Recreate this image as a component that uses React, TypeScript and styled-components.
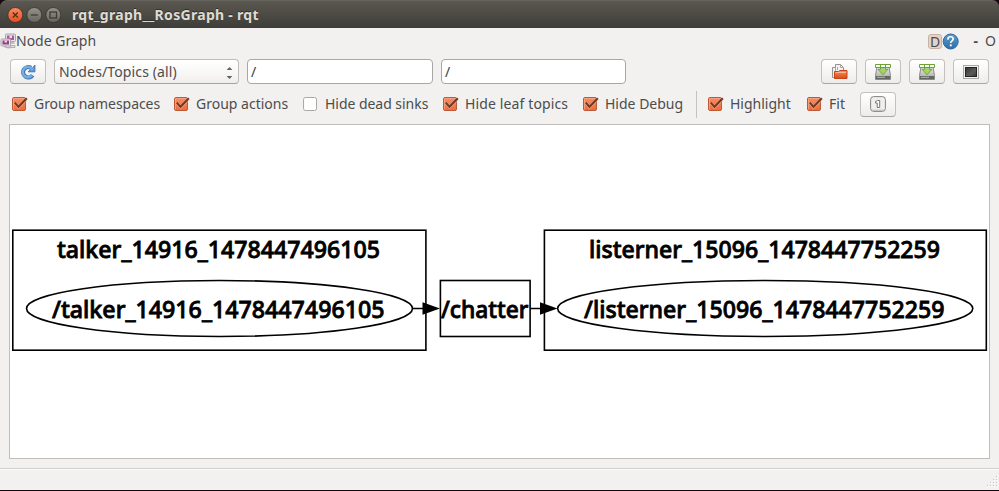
import React from "react";
import styled, { createGlobalStyle } from "styled-components";

const GlobalStyle = createGlobalStyle`
  * { box-sizing: border-box; }
  body { margin: 0; background: #1a0612; overflow: hidden; }
`;

const Window = styled.div`
  width: 999px;
  height: 491px;
  display: flex;
  flex-direction: column;
  border-bottom: 1px solid #160611;
  background: #1a0612;
  color: #4c4c4c;
  font: 14px/20px "Noto Sans", "Open Sans", sans-serif;
  white-space: nowrap;
`;

const TitleBar = styled.header`
  height: 28px;
  flex: none;
  display: flex;
  align-items: center;
  gap: 3px;
  padding-left: 7px;
  border-radius: 7px 7px 0 0;
  border-top: 1px solid #66645c;
  background: linear-gradient(#5a5850, #3e3d38);
`;

const Title = styled.h1`
  margin: 0 0 0 8px;
  color: #dfdbd2;
  font-size: 14px;
  line-height: 24px;
  font-weight: 700;
  letter-spacing: 0.3px;
  text-shadow: 0 -1px #30302c;
`;

const Body = styled.main`
  flex: 1;
  display: flex;
  flex-direction: column;
  background: #f2f1f0;
`;

const DockHeader = styled.div`
  height: 26px;
  display: flex;
  align-items: center;
  padding-right: 3px;
`;

const DockTitle = styled.span`
  flex: 1;
`;

const DockIcon = styled.span`
  display: flex;
  width: 16px;
`;

const DButton = styled.span`
  width: 14px;
  height: 15px;
  border: 1px solid #c9b1a3;
  border-radius: 3px;
  background: #e6d3c8;
  line-height: 13px;
  text-align: center;
`;

const DockSign = styled.span<{ $w: number; $bold?: boolean }>`
  width: ${(p) => p.$w}px;
  font-weight: ${(p) => (p.$bold ? 700 : 400)};
  text-align: right;
`;

const Toolbar = styled.div`
  height: 35px;
  display: flex;
  align-items: center;
  gap: 8px;
  padding: 0 10px;
`;

const Spacer = styled.div`
  flex: 1;
`;

const PushButton = styled.button`
  width: 36px;
  height: 25px;
  flex: none;
  display: flex;
  align-items: center;
  justify-content: center;
  padding: 0;
  border: 1px solid #c3c0bd;
  border-bottom-color: #a9a6a3;
  border-radius: 4px;
  background: linear-gradient(#fff, #f3f2f1 70%, #ececea);
`;

const Combo = styled.div`
  width: 185px;
  height: 25px;
  display: flex;
  align-items: center;
  justify-content: space-between;
  padding: 0 5px 0 4px;
  border: 1px solid #c0bdba;
  border-bottom-color: #a5a2a0;
  border-radius: 4px;
  background: linear-gradient(#fff, #f6f5f4 70%, #eeedec);
  letter-spacing: 0.13px;
`;

const LineEdit = styled.div<{ $w: number }>`
  width: ${(p) => p.$w}px;
  height: 25px;
  padding: 2px 3px;
  border: 1px solid #a9a6a3;
  border-radius: 4px;
  background: #fff;
  color: #3c3c3c;
`;

const Options = styled.div`
  height: 30px;
  display: flex;
  align-items: center;
  padding-left: 12px;
`;

const Option = styled.label<{ $w: number; $ls?: number }>`
  width: ${(p) => p.$w}px;
  flex: none;
  display: flex;
  align-items: center;
  gap: 6px;
  letter-spacing: ${(p) => p.$ls ?? 0}px;
`;

const Separator = styled.div`
  width: 12px;
  height: 27px;
  border-left: 1px solid #c4c2c0;
`;

const Canvas = styled.section`
  height: 335px;
  margin: 5px 9px 9px;
  border: 1px solid #bfbdbb;
  background: #fff;
`;

const StatusBar = styled.footer`
  flex: 1;
  display: flex;
  align-items: flex-end;
  justify-content: flex-end;
  padding: 0 0 2px;
  border-top: 1px solid #d2d0ce;
  box-shadow: inset 0 1px #fbfbfa;
`;

const CheckIcon = ({ on }: { on: boolean }) => (
  <svg width="16" height="16" viewBox="0 0 16 16">
    <defs>
      <linearGradient id="checkFill" x2="0" y2="1">
        <stop offset="0" stopColor="#f58e66" />
        <stop offset="1" stopColor="#ed6a3b" />
      </linearGradient>
    </defs>
    {on ? (
      <>
        <rect x=".5" y="1.5" width="13" height="13" rx="1.5" fill="url(#checkFill)" stroke="#bd5936" />
        <path d="M1.5 13.5V2.5h11" fill="none" stroke="#f9a98b" strokeOpacity=".7" />
        <path d="M3 7.2 6.5 11 15 2.5" fill="none" stroke="#fac0a5" strokeWidth="3.4" strokeOpacity=".45" />
        <path d="M2.8 6.7 6.5 10.8 14.8 2.2" fill="none" stroke="#6d3a29" strokeWidth="2" />
      </>
    ) : (
      <rect x=".5" y="1.5" width="13" height="13" rx="2" fill="#fff" stroke="#aaa7a4" />
    )}
  </svg>
);

const WindowButton = ({ kind }: { kind: "close" | "min" | "max" }) => (
  <svg width="16" height="16" viewBox="0 0 16 16">
    <defs>
      <linearGradient id={`wb-${kind}`} x2="0" y2="1">
        <stop offset="0" stopColor={kind === "close" ? "#f88b65" : "#96948a"} />
        <stop offset="1" stopColor={kind === "close" ? "#e64e1c" : "#66645c"} />
      </linearGradient>
    </defs>
    <circle cx="8.3" cy="8" r="7.5" fill={`url(#wb-${kind})`} stroke="#35342f" strokeWidth=".8" />
    {kind === "close" && <path d="M5.8 5.5l5 5M10.8 5.5l-5 5" stroke="#52301f" strokeWidth="1.3" />}
    {kind === "min" && <path d="M4.8 8h7" stroke="#3d3c37" strokeWidth="1.3" />}
    {kind === "max" && <rect x="5" y="5" width="6.5" height="6" fill="none" stroke="#3d3c37" strokeWidth="1.3" />}
  </svg>
);

const NodeGraphIcon = () => (
  <svg width="16" height="16" viewBox="0 0 16 16">
    <path d="M4 12.5c1 2.5 5 2.5 8 1.5" fill="none" stroke="#b6b4b3" strokeWidth="1.6" />
    <rect x="5.5" y="1" width="10" height="7.5" rx="1" fill="#e9e3e8" stroke="#aaa2a9" />
    <path d="M7 2.5h7V7H7z" fill="#a8599f" />
    <path d="M9.5 2.5H12V5H9.5z" fill="#f3dff0" />
    <path d="M10 10h4.5" stroke="#b3b1b0" strokeWidth="1.5" />
    <rect x="1" y="6" width="9.5" height="7" rx="1" fill="#e9e3e8" stroke="#aaa2a9" />
    <path d="M2.5 7.5H9v4H2.5z" fill="#91418b" />
    <path d="M4.5 7.5H7v2H4.5z" fill="#eed5eb" />
    <path d="M10.5 12.5h4.5v2h-4.5z" fill="#dedddd" stroke="#b3b1b0" />
  </svg>
);

const HelpIcon = () => (
  <svg width="17" height="17" viewBox="0 0 17 17">
    <defs>
      <linearGradient id="helpFill" x2="0" y2="1">
        <stop offset="0" stopColor="#5c9dcd" />
        <stop offset="1" stopColor="#2f6da6" />
      </linearGradient>
    </defs>
    <circle cx="8.7" cy="8.5" r="7.5" fill="url(#helpFill)" stroke="#2e689f" />
    <path d="M6 6.7V6c0-3 5.2-3 5.2 0 0 1.8-2.5 1.8-2.5 4" fill="none" stroke="#fff" strokeWidth="1.6" />
    <path d="M7.8 11.4h1.9v1.9H7.8z" fill="#fff" />
  </svg>
);

const RefreshIcon = () => (
  <svg width="18" height="16" viewBox="0 0 18 16">
    <path d="M13.6 11.2A5.2 5.2 0 1 1 12 3.8" fill="none" stroke="#3e79b8" strokeWidth="4.2" />
    <path d="M15.9 1v6.8H9.2l2.2-2.3V3.6l2.4.4z" fill="#5b98d3" stroke="#3e79b8" strokeLinejoin="round" />
    <path d="M13.2 11.1A5.2 5.2 0 1 1 12 3.9l1.8 2" fill="none" stroke="#76aee0" strokeWidth="2.4" />
  </svg>
);

const FolderIcon = () => (
  <svg width="17" height="16" viewBox="0 0 17 16">
    <defs>
      <linearGradient id="folderFill" x2="0" y2="1">
        <stop offset="0" stopColor="#f79065" />
        <stop offset="1" stopColor="#dd4814" />
      </linearGradient>
    </defs>
    <path d="M1.5 13.5v-10h3v-3h5l3 3v10z" fill="#f4f3f2" stroke="#94928f" />
    <path d="M4.5 4v6M9.5.5v3h3M6.5 3v3" fill="none" stroke="#aaa8a5" />
    <path d="M3.5 14.5v-7h4l1-1h7.5v8z" fill="url(#folderFill)" stroke="#c5451a" />
    <path d="M4.5 8.5H15" stroke="#ffb393" />
  </svg>
);

const SaveIcon = () => (
  <svg width="16" height="16" viewBox="0 0 16 16">
    <defs>
      <linearGradient id="diskFill" x2="0" y2="1">
        <stop offset="0" stopColor="#ededeb" />
        <stop offset="1" stopColor="#a2a29d" />
      </linearGradient>
    </defs>
    <path d="M2 3h12l1.5 8.5v4H.5v-4z" fill="url(#diskFill)" stroke="#8b8b86" />
    <path d="M1 12h14v3H1z" fill="#656561" />
    <path d="M2 13.3h8" stroke="#b7b7b2" />
    <path d="M.5.5h15v3H.5z" fill="#fff" stroke="#69a333" />
    <path d="M5.5 3.5h5v1.8H13L8 10.8 3 5.3h2.5z" fill="#a4d465" stroke="#61992c" strokeWidth=".8" />
    <path d="M5.5 1v2M10.5 1v2" stroke="#69a333" />
  </svg>
);

const ScreenIcon = () => (
  <svg width="16" height="14" viewBox="0 0 16 14">
    <defs>
      <linearGradient id="screenFill" x2="1" y2="1">
        <stop stopColor="#333" />
        <stop offset=".6" stopColor="#5c5c5c" />
        <stop offset="1" stopColor="#363636" />
      </linearGradient>
    </defs>
    <rect x=".5" y=".5" width="15" height="13" fill="#f1f1f0" stroke="#aaa9a7" />
    <rect x="2.5" y="2.5" width="11" height="9" fill="url(#screenFill)" stroke="#242424" />
  </svg>
);

const ZoomOneIcon = () => (
  <svg width="16" height="16" viewBox="0 0 16 16">
    <rect x=".6" y=".6" width="14.8" height="14.8" rx="3" fill="#f0efee" stroke="#858381" />
    <path d="M5.5 5.5l2-1h2.2v7H7.2V7H5.5z" fill="#fff" stroke="#777573" />
    <path d="M2 14.2h12" stroke="#bbb9b7" />
  </svg>
);

const ComboArrows = () => (
  <svg width="7" height="14" viewBox="0 0 7 14">
    <path d="M.6 5 3.5 2 6.4 5zM.6 11h5.8L3.5 14z" fill="#656360" />
  </svg>
);

const SizeGrip = () => (
  <svg width="12" height="12" viewBox="0 0 12 12">
    {[0, 1, 2, 3].flatMap((row) =>
      Array.from({ length: row + 1 }, (_, i) => (
        <g key={`${row}-${i}`}>
          <rect x={10 - i * 3} y={row * 3 + 1} width="1" height="1" fill="#fff" />
          <rect x={9 - i * 3} y={row * 3} width="1" height="1" fill="#c9c6c3" />
        </g>
      ))
    )}
  </svg>
);

const GraphText = styled.text`
  font: 500 23.5px "Noto Sans", "Open Sans", sans-serif;
  fill: #000;
  stroke: #000;
  stroke-width: 0.8px;
`;

const labels = [
  { text: "talker_14916_1478447496105", x: 57, y: 257.5, w: 323 },
  { text: "/talker_14916_1478447496105", x: 52, y: 317.5, w: 332.5 },
  { text: "/chatter", x: 441, y: 317.5, w: 87.5 },
  { text: "listerner_15096_1478447752259", x: 589, y: 257.5, w: 351 },
  { text: "/listerner_15096_1478447752259", x: 584, y: 317.5, w: 360.5 },
];

const Graph = () => (
  <svg width="979" height="333" viewBox="10 125 979 333" display="block">
    <g fill="none" stroke="#000" strokeWidth="1.6">
      <rect x="12.8" y="230.2" width="413.1" height="120" />
      <rect x="544.4" y="230.2" width="441.9" height="120" />
      <rect x="440.4" y="280.5" width="89.7" height="56" />
      <ellipse cx="219.5" cy="308.5" rx="193" ry="28" />
      <ellipse cx="765.2" cy="308.5" rx="207.6" ry="28" />
      <path d="M412.5 308.5H424M530 308.5h11" />
    </g>
    <path d="M422.5 302.3v12.4l17.5-6.2zM540 302.3v12.4l17.5-6.2z" />
    {labels.map((l) => (
      <GraphText key={l.text} x={l.x} y={l.y} textLength={l.w} lengthAdjust="spacingAndGlyphs">
        {l.text}
      </GraphText>
    ))}
  </svg>
);

const options = [
  { text: "Group namespaces", w: 162, on: true, ls: -0.06 },
  { text: "Group actions", w: 129, on: true, ls: 0 },
  { text: "Hide dead sinks", w: 140, on: false, ls: -0.04 },
  { text: "Hide leaf topics", w: 140, on: true, ls: 0.13 },
  { text: "Hide Debug", w: 113, on: true, ls: 0 },
];

export default function App() {
  return (
    <Window>
      <GlobalStyle />
      <TitleBar>
        <WindowButton kind="close" />
        <WindowButton kind="min" />
        <WindowButton kind="max" />
        <Title>rqt_graph__RosGraph - rqt</Title>
      </TitleBar>
      <Body>
        <DockHeader>
          <DockIcon><NodeGraphIcon /></DockIcon>
          <DockTitle>Node Graph</DockTitle>
          <DButton>D</DButton>
          <HelpIcon />
          <DockSign $w={19} $bold>-</DockSign>
          <DockSign $w={18}>O</DockSign>
        </DockHeader>
        <Toolbar>
          <PushButton><RefreshIcon /></PushButton>
          <Combo>Nodes/Topics (all)<ComboArrows /></Combo>
          <LineEdit $w={186}>/</LineEdit>
          <LineEdit $w={185}>/</LineEdit>
          <Spacer />
          <PushButton><FolderIcon /></PushButton>
          <PushButton><SaveIcon /></PushButton>
          <PushButton><SaveIcon /></PushButton>
          <PushButton><ScreenIcon /></PushButton>
        </Toolbar>
        <Options>
          {options.map((o) => (
            <Option key={o.text} $w={o.w} $ls={o.ls}><CheckIcon on={o.on} />{o.text}</Option>
          ))}
          <Separator />
          <Option $w={99}><CheckIcon on />Highlight</Option>
          <Option $w={53}><CheckIcon on />Fit</Option>
          <PushButton><ZoomOneIcon /></PushButton>
        </Options>
        <Canvas><Graph /></Canvas>
        <StatusBar><SizeGrip /></StatusBar>
      </Body>
    </Window>
  );
}
